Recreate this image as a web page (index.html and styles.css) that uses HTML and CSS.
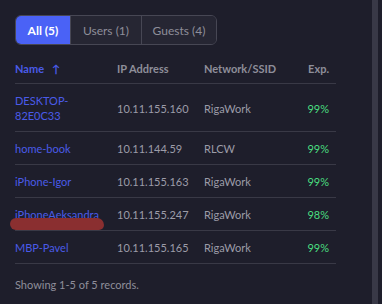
FILE: index.html
```html
<!DOCTYPE html>
<html>
<head>
<meta charset="UTF-8">
    <title>Clients</title>
    <link rel="stylesheet" href="styles.css">
</head>
<body>
    <div class="page">
        <div class="main">
            <div class="tabs">
                <button class="tab tab-all active">All (5)</button>
                <button class="tab tab-users">Users (1)</button>
                <button class="tab tab-guests">Guests (4)</button>
            </div>

            <table class="clients">
                <thead>
                    <tr>
                        <th class="col-name sorted">Name <span class="arrow">&#8593;</span></th>
                        <th class="col-ip">IP Address</th>
                        <th class="col-net">Network/SSID</th>
                        <th class="col-exp">Exp.</th>
                    </tr>
                </thead>
                <tbody>
                    <tr>
                        <td class="name">DESKTOP-<br>82E0C33</td>
                        <td>10.11.155.160</td>
                        <td>RigaWork</td>
                        <td class="exp">99%</td>
                    </tr>
                    <tr>
                        <td class="name">home-book</td>
                        <td>10.11.144.59</td>
                        <td>RLCW</td>
                        <td class="exp">99%</td>
                    </tr>
                    <tr>
                        <td class="name">iPhone-Igor</td>
                        <td>10.11.155.163</td>
                        <td>RigaWork</td>
                        <td class="exp">99%</td>
                    </tr>
                    <tr>
                        <td class="name redacted">iPhoneAeksandra<span class="scribble"></span></td>
                        <td>10.11.155.247</td>
                        <td>RigaWork</td>
                        <td class="exp">98%</td>
                    </tr>
                    <tr>
                        <td class="name">MBP-Pavel</td>
                        <td>10.11.155.165</td>
                        <td>RigaWork</td>
                        <td class="exp">99%</td>
                    </tr>
                </tbody>
            </table>

            <p class="summary">Showing 1-5 of 5 records.</p>
        </div>
        <div class="scrollbar"></div>
    </div>
</body>
</html>
```

FILE: styles.css
```css
body { margin: 0; background-color: #1e1e2b; font-family: Lato, "Open Sans", sans-serif; font-size: 11px; color: #9c9ca8; }
.page { display: flex; height: 304px; }
.main { flex: 1; padding: 15px 0 0 15px; }
.scrollbar { width: 6px; margin-right: 4px; background-color: #393947; }

.tabs { display: inline-flex; height: 30px; border: 1px solid #474754; border-radius: 6px; overflow: hidden; box-sizing: border-box; }
.tab { font-family: inherit; font-size: 12px; color: #8e8e9a; background-color: #262633; border: none; border-left: 1px solid #474754; padding: 0; margin: 0; text-align: center; cursor: pointer; }
.tab:first-child { border-left: none; }
.tab-all { width: 54px; }
.tab-users { width: 71px; }
.tab-guests { width: 75px; }
.tab.active { background-color: #4a62f6; color: #ffffff; font-weight: bold; }

.clients { width: 321px; margin-top: 16px; border-collapse: collapse; }
.clients th { text-align: left; font-weight: bold; color: #8e8e9a; line-height: 15px; padding: 0 0 7px 0; border-bottom: 1px solid #393946; }
.clients th.sorted { color: #4a5be8; }
.arrow { margin-left: 5px; }
.clients td { line-height: 15px; padding: 9px 0 8px 0; border-bottom: 1px solid #393946; color: #9c9ca8; vertical-align: middle; }
.col-name { width: 102px; }
.col-ip { width: 87px; }
.clients .col-exp, .clients td.exp { text-align: right; padding-right: 7px; }
.clients td.name { color: #4a5be8; }
.clients td.exp { color: #4ade80; }

.redacted { position: relative; }
.scribble { position: absolute; left: -5px; top: 20px; width: 94px; height: 12px; border-radius: 6px 7px 5px 6px; background-color: #8a2f30; }

.summary { margin: 13px 0 0 0; line-height: 15px; color: #8e8e9a; }
```
